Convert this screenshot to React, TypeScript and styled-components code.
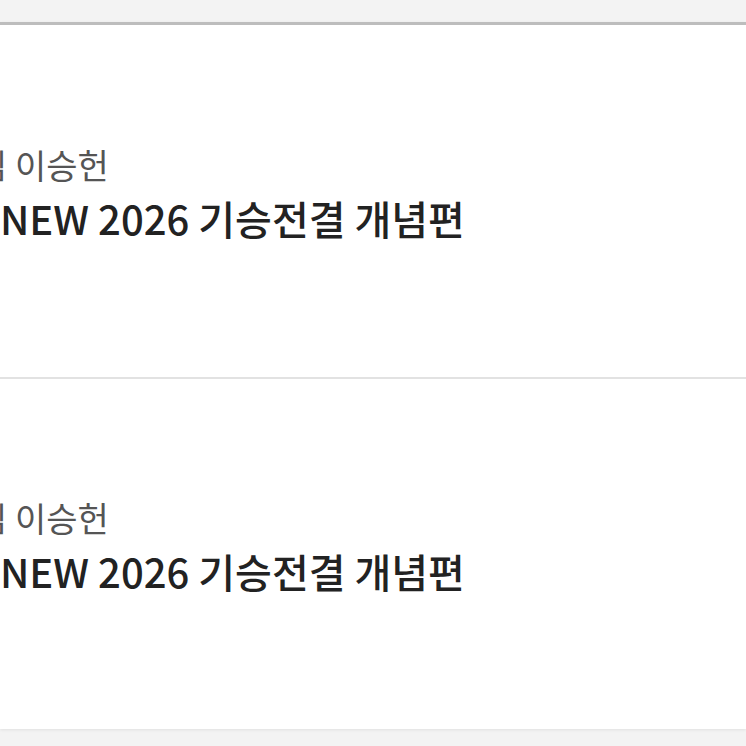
import styled, { createGlobalStyle } from 'styled-components'

const GlobalStyle = createGlobalStyle`
  html, body {
    margin: 0;
    padding: 0;
    background: #f3f3f3;
    font-family: "Noto Sans CJK KR", "Noto Sans", sans-serif;
  }
`

const Page = styled.div`
  width: 746px;
  height: 746px;
  overflow: hidden;
  background: #f3f3f3;
  padding-top: 22px;
  box-sizing: border-box;
`

const List = styled.ul`
  margin: 0;
  padding: 0;
  list-style: none;
  background: #ffffff;
  border-top: 3px solid #bdbdbd;
  box-shadow: 0 1px 3px rgba(0, 0, 0, 0.08);
`

const Item = styled.li`
  display: flex;
  flex-direction: column;
  justify-content: center;
  height: 352px;
  padding-bottom: 16px;
  box-sizing: border-box;
  overflow: hidden;
  & + & {
    border-top: 2px solid #e2e2e2;
  }
`

const Teacher = styled.div`
  margin-left: -24px;
  font-size: 34px;
  font-weight: 400;
  line-height: 46px;
  color: #555555;
  white-space: nowrap;
`

const Title = styled.div`
  margin-top: 4px;
  font-size: 40px;
  font-weight: 500;
  line-height: 52px;
  color: #222222;
  white-space: nowrap;
`

const lectures = [
  { teacher: '님 이승헌', title: 'NEW 2026 기승전결 개념편' },
  { teacher: '님 이승헌', title: 'NEW 2026 기승전결 개념편' },
]

const App = () => {
  return (
    <Page>
      <GlobalStyle />
      <List>
        {lectures.map((item, index) => (
          <Item key={index}>
            <Teacher>{item.teacher}</Teacher>
            <Title>{item.title}</Title>
          </Item>
        ))}
      </List>
    </Page>
  )
}

export default App
